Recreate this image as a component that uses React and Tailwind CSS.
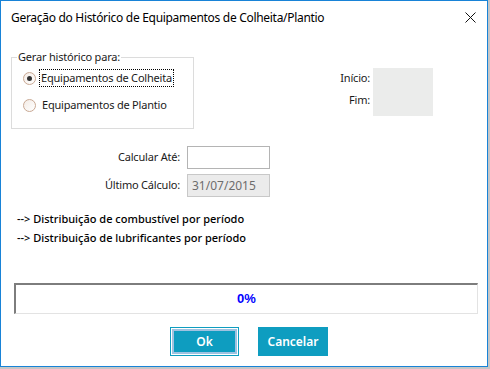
import React from 'react';

const font = { fontFamily: '"Noto Sans", "Open Sans", sans-serif' };

const Radio = ({ checked, label, focused }) => (
  <div className="flex items-center h-[18px]">
    <span className="w-[13px] h-[13px] rounded-full border border-[#c9a994] bg-gradient-to-br from-[#f4ece6] to-white flex items-center justify-center ml-[11px]">
      {checked && <span className="w-[5px] h-[5px] rounded-full bg-[#333]" />}
    </span>
    <span className={`ml-[4px] px-[1px] leading-[16px] ${focused ? 'outline-1 outline-dotted outline-black' : 'border border-transparent'}`}>
      {label}
    </span>
  </div>
);

const App = () => {
  return (
    <div className="w-[490px] h-[369px] bg-[#c6c6c6]" style={font}>
      <div className="w-[488px] h-[367px] bg-white border border-[#1883d7] flex flex-col text-[11px] tracking-[-0.2px] text-[#1a1a1a]">
        <div className="h-[31px] flex items-center justify-between pl-[10px] pr-[10px]">
          <span className="text-[12px] tracking-[-0.3px] text-black mt-[2px]">Geração do Histórico de Equipamentos de Colheita/Plantio</span>
          <svg width="11" height="11" viewBox="0 0 11 11" className="mr-[1px] mt-[2px]">
            <path d="M0.5 0.5 L10.5 10.5 M10.5 0.5 L0.5 10.5" stroke="#111" strokeWidth="1" />
          </svg>
        </div>

        <div className="flex mt-[17px]">
          <fieldset className="ml-[10px] w-[183px] h-[80px] border border-[#dcdcdc] px-0 pt-[4px] pb-0">
            <legend className="ml-[5px] px-[1px] leading-[16px]">Gerar histórico para:</legend>
            <div className="flex flex-col gap-[9px]">
              <Radio checked focused label="Equipamentos de Colheita" />
              <Radio label="Equipamentos de Plantio" />
            </div>
          </fieldset>
          <div className="ml-auto mr-[54px] mt-[19px] flex">
            <div className="flex flex-col items-end pt-[2px] gap-[6px] leading-[16px]">
              <span>Início:</span>
              <span>Fim:</span>
            </div>
            <div className="w-[60px] h-[48px] bg-[#ebeceb] ml-[3px]" />
          </div>
        </div>

        <div className="flex flex-col gap-[5px] mt-[17px] ml-[80px]">
          <div className="flex items-center">
            <span className="w-[99px] text-right">Calcular Até:</span>
            <div className="ml-[7px] w-[83px] h-[23px] border border-[#b4b4b4] bg-white" />
          </div>
          <div className="flex items-center">
            <span className="w-[99px] text-right">Último Cálculo:</span>
            <div className="ml-[7px] w-[83px] h-[23px] border border-[#c8c8c8] bg-[#ebebeb] text-[#6d6d6d] text-[12px] tracking-normal pl-[4px] leading-[21px]">
              31/07/2015
            </div>
          </div>
        </div>

        <div className="ml-[16px] mt-[14px] flex flex-col gap-[3px] font-medium tracking-normal text-black leading-[16px]">
          <span>--&gt; Distribuição de combustível por período</span>
          <span>--&gt; Distribuição de lubrificantes por período</span>
        </div>

        <div className="ml-[13px] mt-[37px] w-[464px] h-[31px] border-2 border-t-[#7d7d7d] border-l-[#7d7d7d] border-r-[#e3e3e3] border-b-[#e3e3e3] border-r-[1px] border-b-[1px] flex items-center justify-center">
          <span className="text-[#0000ff] font-bold text-[13px] tracking-normal" style={{ fontFamily: '"Liberation Sans", sans-serif' }}>0%</span>
        </div>

        <div className="flex ml-[169px] mt-[13px] gap-[19px] tracking-normal">
          <button className="w-[69px] h-[29px] border border-[#0e9dc0] p-0 bg-white">
            <div className="w-full h-full border border-white">
              <div className="w-full h-full border-[2px] border-[#9fc2e0] bg-[#0e9dc0] text-white text-[12px] font-semibold flex items-center justify-center">
                Ok
              </div>
            </div>
          </button>
          <button className="w-[70px] h-[29px] bg-[#0e9dc0] text-white text-[12px] font-semibold flex items-center justify-center">
            Cancelar
          </button>
        </div>
      </div>
    </div>
  );
};

export default App;
